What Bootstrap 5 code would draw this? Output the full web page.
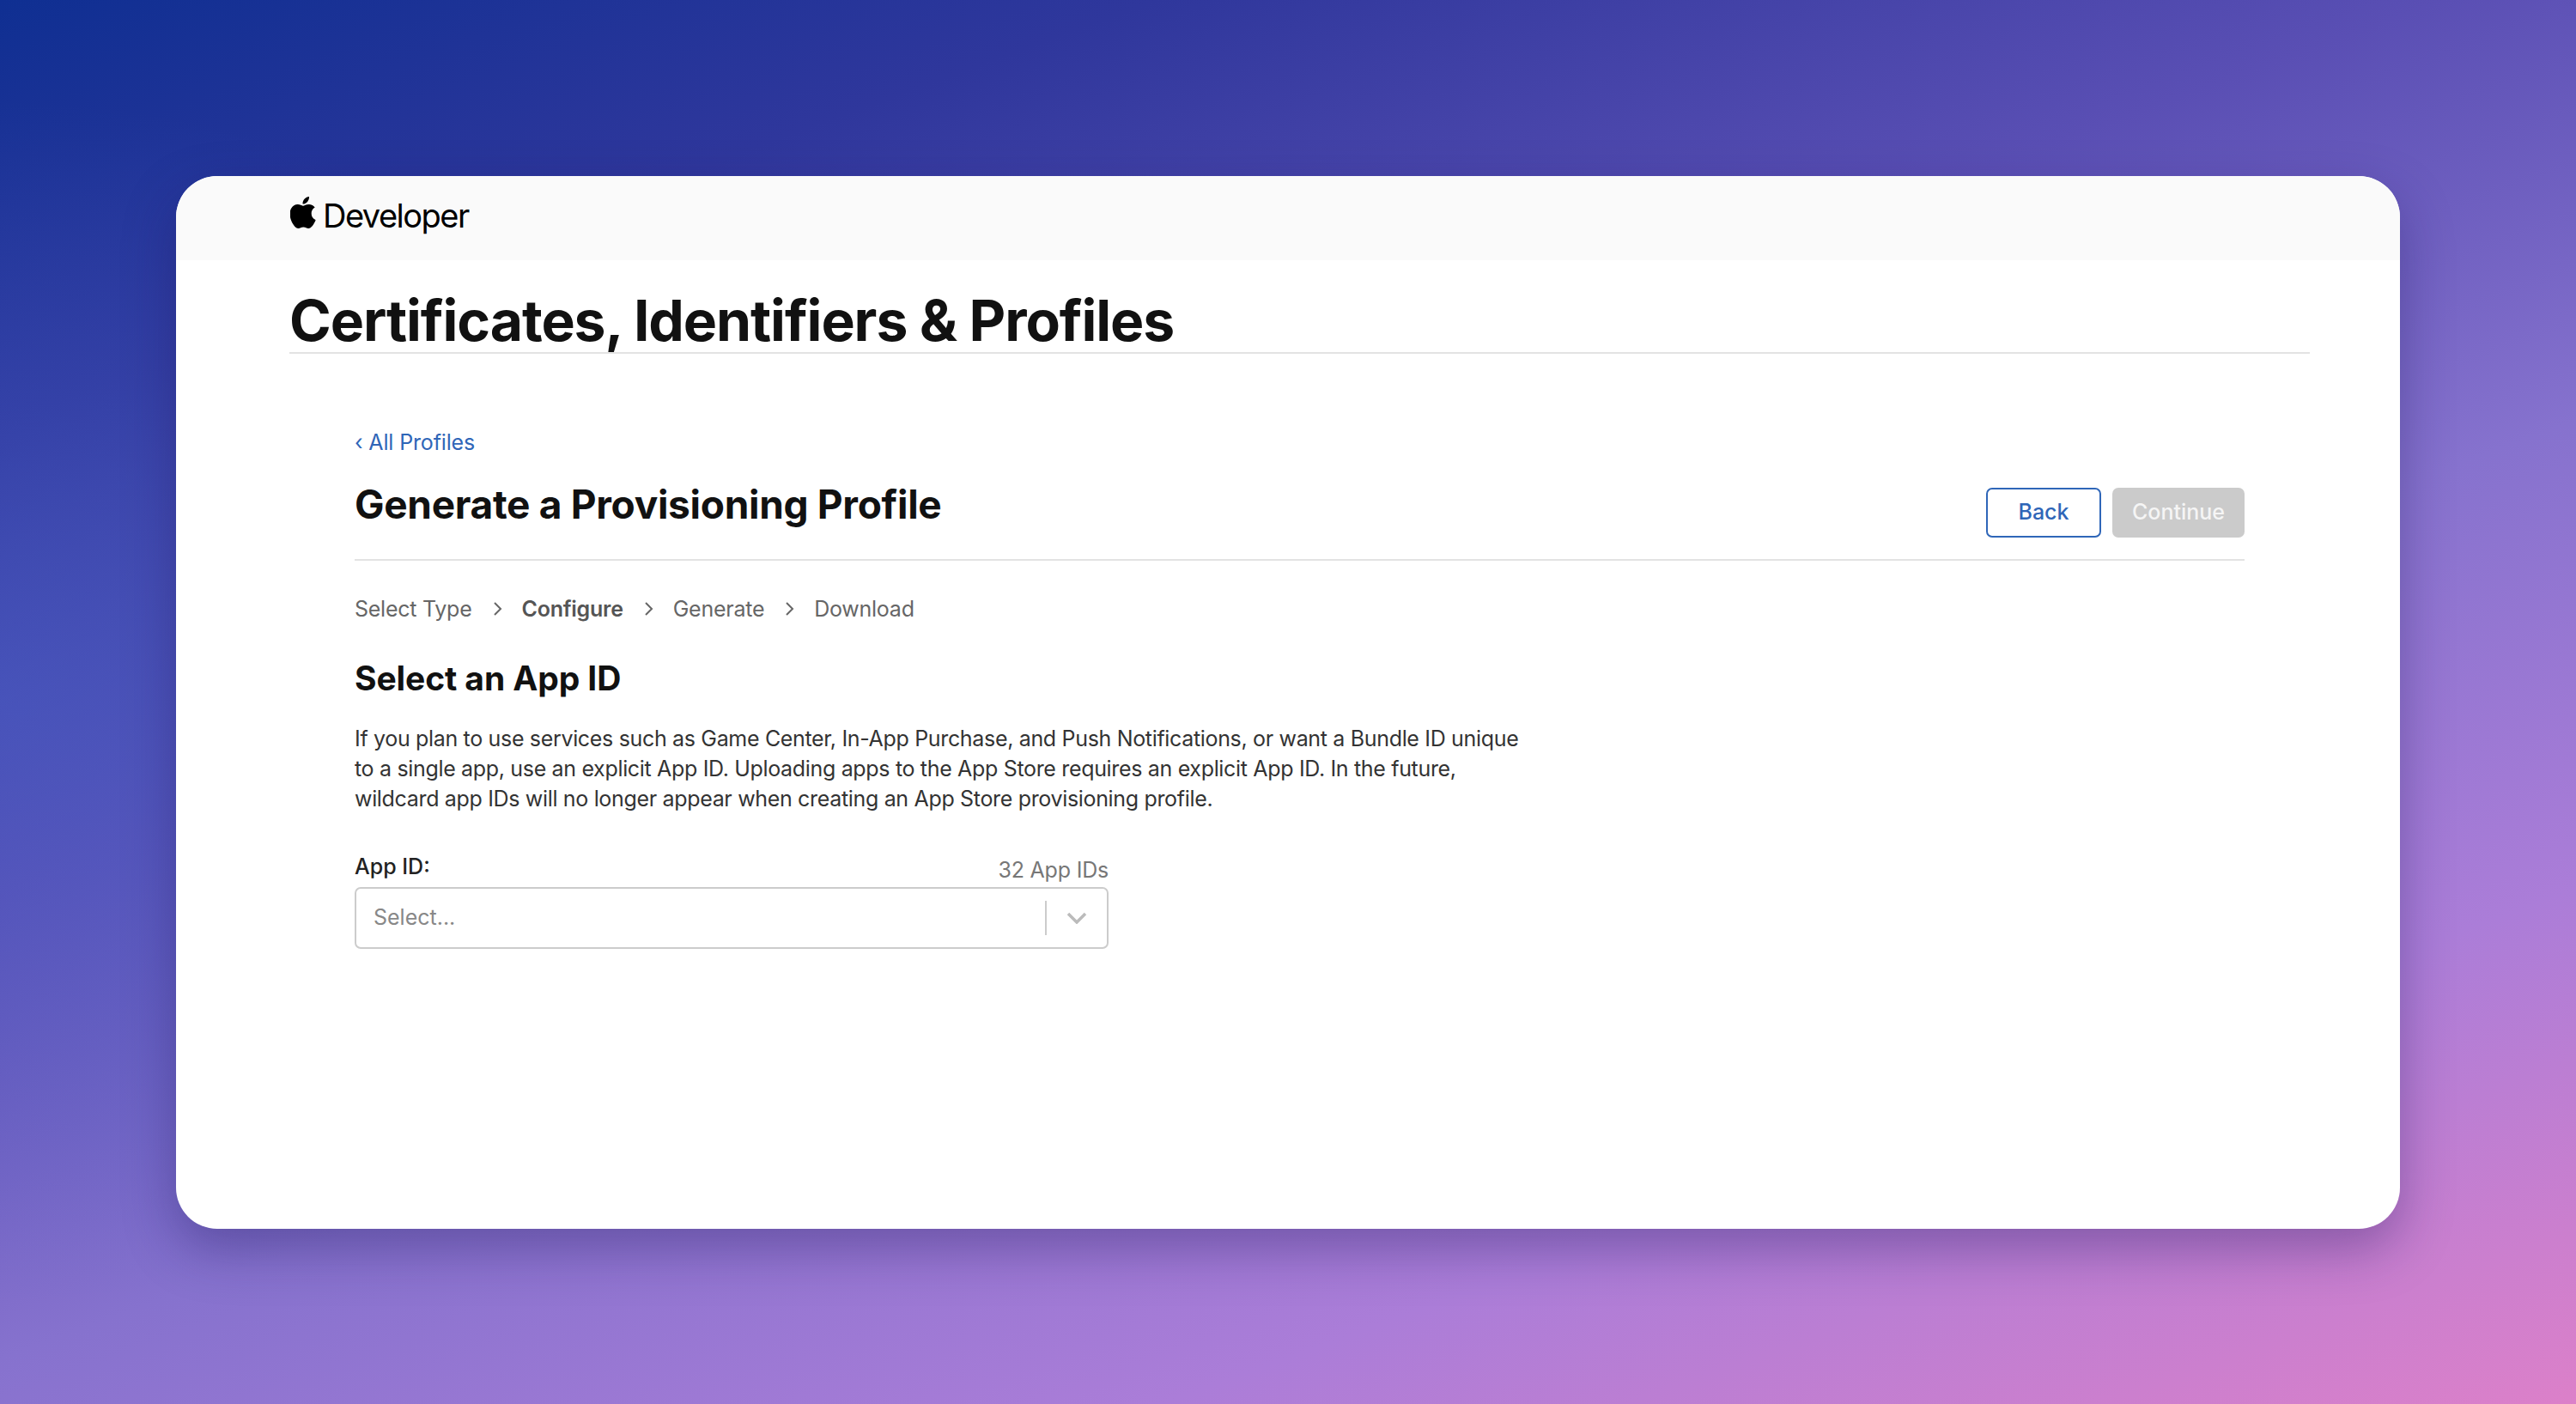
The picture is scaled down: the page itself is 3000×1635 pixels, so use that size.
<!DOCTYPE html>
<html lang="en">
<head>
    <meta charset="UTF-8">
    <meta name="viewport" content="width=device-width, initial-scale=1.0">
    <title>Certificates, Identifiers &amp; Profiles</title>
    <link href="https://cdn.jsdelivr.net/npm/bootstrap@5.3.0/dist/css/bootstrap.min.css" rel="stylesheet">
    <style>
        html, body { height: 100%; }
        body {
            font-family: Inter, "Liberation Sans", sans-serif;
            color: #111;
            background:
                radial-gradient(900px 700px at 0% 50%, rgba(70, 100, 205, .45), rgba(70, 100, 205, 0)),
                linear-gradient(160deg, #0f2f92 0%, #2f379c 18%, #5a4fb4 38%, #8672ce 58%, #ab7dd8 78%, #dc80c9 100%);
            padding: 205px 205px 204px;
        }
        .app-window {
            height: 1226px;
            border-radius: 48px;
            background: #fff;
            box-shadow: 0 24px 60px rgba(30, 20, 90, .35);
            overflow: hidden;
        }
        .dev-bar { height: 98px; padding-left: 133px; padding-bottom: 5px; background: #fafafa; }
        .dev-brand { font-size: 38px; letter-spacing: -1.5px; color: #000; gap: 8px; }
        .dev-brand svg { margin-top: -9px; }
        .page-wrap { padding: 32px 105px 0 132px; }
        .page-title { font-size: 66px; font-weight: 700; line-height: 76px; letter-spacing: -1.1px; margin: 0; border-bottom: 2px solid #e3e3e3; color: #111; height: 77px; }
        .inner-wrap { padding: 87px 76px 0; }
        .back-link { font-size: 25px; line-height: 32px; letter-spacing: -.15px; color: #2f66b8; text-decoration: none; }
        .head-row { height: 122px; border-bottom: 2px solid #e3e3e3; }
        .head-row h2 { font-size: 46px; font-weight: 700; line-height: 56px; letter-spacing: -.3px; margin: 28px 0 0; color: #111; }
        .btn-pair { gap: 13px; padding-top: 37px; }
        .act-btn { font-size: 25px; font-weight: 500; height: 58px; padding: 0; border-radius: 7px; }
        .act-back { width: 134px; color: #2f66b8; border: 2px solid #2f66b8; background: #fff; }
        .btn.act-next, .btn.act-next:disabled { width: 154px; color: #f5f5f5; background: #cbcbcb; border: 0; opacity: 1; }
        .step-row { font-size: 25px; line-height: 32px; letter-spacing: -.25px; color: #666; margin-top: 40px; }
        .step-row b { font-weight: 600; color: #555; }
        .step-row svg { margin: 0 23px 0 24px; }
        .sec-title { font-size: 39px; font-weight: 700; line-height: 46px; margin: 42px 0 0; color: #111; letter-spacing: -.1px; }
        .sec-text { font-size: 25px; line-height: 35px; letter-spacing: -.33px; width: 1375px; margin: 30px 0 0; color: #333; }
        .field-box { width: 878px; margin-top: 45px; }
        .field-top { font-size: 25px; line-height: 32px; }
        .field-top label { color: #222; font-weight: 500; }
        .field-top span { color: #777; padding-top: 4px; letter-spacing: -.2px; }
        .pick-box { height: 72px; margin-top: 4px; border: 2px solid #ccc; border-radius: 7px; padding-left: 20px; color: #888; font-size: 25px; }
        .pick-sep { width: 2px; height: 40px; background: #ccc; }
        .pick-arrow { width: 70px; }
    </style>
</head>
<body>
    <div class="app-window">
        <div class="dev-bar d-flex align-items-center">
            <div class="dev-brand d-flex align-items-center">
                <svg width="30" height="37" viewBox="2.500 0 19.500 24" fill="#000"><path d="M12.152 6.896c-.948 0-2.415-1.078-3.960-1.040-2.040.027-3.910 1.183-4.961 3.014-2.117 3.675-.546 9.103 1.519 12.090 1.013 1.454 2.208 3.090 3.792 3.039 1.520-.065 2.090-.987 3.935-.987 1.831 0 2.350.987 3.960.948 1.637-.026 2.676-1.480 3.676-2.948 1.156-1.688 1.636-3.325 1.662-3.415-.039-.013-3.182-1.221-3.220-4.857-.026-3.040 2.480-4.494 2.597-4.559-1.429-2.090-3.623-2.324-4.390-2.376-2-.156-3.675 1.090-4.610 1.090zM15.530 3.830c.843-1.012 1.400-2.427 1.245-3.830-1.207.052-2.662.805-3.532 1.818-.780.896-1.454 2.338-1.273 3.714 1.338.104 2.715-.688 3.559-1.701"/></svg>
                <span>Developer</span>
            </div>
        </div>
        <div class="page-wrap">
            <h1 class="page-title">Certificates, Identifiers &amp; Profiles</h1>
            <div class="inner-wrap">
                <a class="back-link d-block" href="#">‹ All Profiles</a>
                <div class="head-row d-flex justify-content-between">
                    <h2>Generate a Provisioning Profile</h2>
                    <div class="btn-pair d-flex align-items-start">
                        <button class="btn act-btn act-back" type="button">Back</button>
                        <button class="btn act-btn act-next" type="button" disabled>Continue</button>
                    </div>
                </div>
                <div class="step-row d-flex align-items-center">
                    <span>Select Type</span>
                    <svg width="11" height="18" viewBox="0 0 11 18" fill="none" stroke="#666" stroke-width="2"><path d="M2 2l7 7-7 7"/></svg>
                    <b>Configure</b>
                    <svg width="11" height="18" viewBox="0 0 11 18" fill="none" stroke="#666" stroke-width="2"><path d="M2 2l7 7-7 7"/></svg>
                    <span>Generate</span>
                    <svg width="11" height="18" viewBox="0 0 11 18" fill="none" stroke="#666" stroke-width="2"><path d="M2 2l7 7-7 7"/></svg>
                    <span>Download</span>
                </div>
                <h3 class="sec-title">Select an App ID</h3>
                <p class="sec-text">If you plan to use services such as Game Center, In-App Purchase, and Push Notifications, or want a Bundle ID unique to a single app, use an explicit App ID. Uploading apps to the App Store requires an explicit App ID. In the future, wildcard app IDs will no longer appear when creating an App Store provisioning profile.</p>
                <div class="field-box">
                    <div class="field-top d-flex justify-content-between">
                        <label>App ID:</label>
                        <span>32 App IDs</span>
                    </div>
                    <div class="pick-box d-flex align-items-center justify-content-between">
                        <span>Select...</span>
                        <div class="d-flex align-items-center">
                            <div class="pick-sep"></div>
                            <div class="pick-arrow d-flex justify-content-center">
                                <svg width="24" height="14" viewBox="0 0 24 14" fill="none" stroke="#bbb" stroke-width="3.500"><path d="M2 2l10 10L22 2"/></svg>
                            </div>
                        </div>
                    </div>
                </div>
            </div>
        </div>
    </div>
    <script src="https://cdn.jsdelivr.net/npm/bootstrap@5.3.0/dist/js/bootstrap.bundle.min.js"></script>
</body>
</html>
